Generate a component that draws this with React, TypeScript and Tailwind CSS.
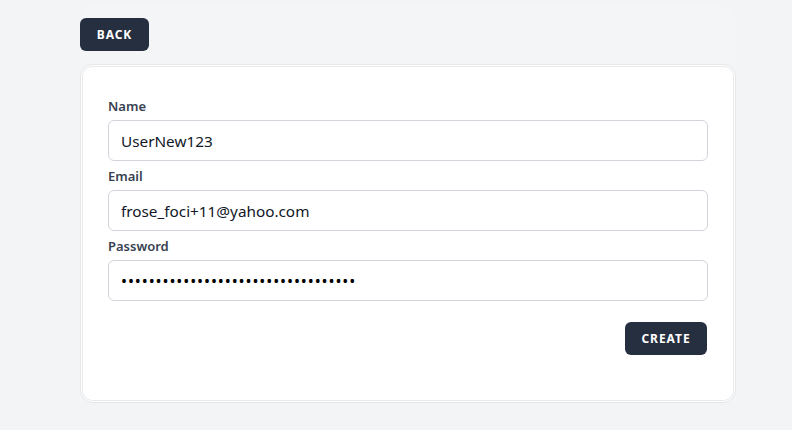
import React, { useState } from "react";

export default function App() {
  const [name, setName] = useState("UserNew123");
  const [email, setEmail] = useState("frose_foci+11@yahoo.com");
  const [password, setPassword] = useState("pass-word-1234567890-abcdefghijklm");

  const fields = [
    { label: "Name", type: "text", value: name, set: setName },
    { label: "Email", type: "email", value: email, set: setEmail },
    { label: "Password", type: "password", value: password, set: setPassword },
  ];

  return (
    <div className="min-h-screen w-full bg-[#f3f4f6] font-['Noto_Sans',sans-serif] pt-[5px]">
      <div className="ml-[80px] w-[656px] rounded-t-xl bg-[#f4f5f7] shadow-[0_0_1px_rgba(0,0,0,0.04)] pt-[13px]">
        <button className="h-[33px] w-[69px] rounded-md bg-[#252f3f] text-[12px] font-bold tracking-[0.08em] text-white">
          BACK
        </button>

        <div className="mt-[13px] rounded-xl border border-gray-200 bg-white pl-[27px] pr-7 pt-[31px] pb-[47px] shadow-[inset_0_0_0_1px_white,inset_0_0_0_2px_#e9eaec]">
          {fields.map((f, i) => (
            <div key={f.label} className={i > 0 ? "mt-[5px]" : ""}>
              <label className="block h-5 text-[13px] font-semibold leading-5 text-[#374151]">
                {f.label}
              </label>
              <input
                type={f.type}
                value={f.value}
                onChange={(e) => f.set(e.target.value)}
                className={
                  f.type === "password"
                    ? "mt-1 block h-[41px] w-[600px] rounded-md border border-[#d1d5db] px-3 text-[16px] tracking-[0.9px] text-black outline-none"
                    : "mt-1 block h-[41px] w-[600px] rounded-md border border-[#d1d5db] px-3 text-[15.3px] text-[#111827] outline-none"
                }
              />
            </div>
          ))}

          <div className="mt-[21px] flex justify-end">
            <button className="h-[33px] w-[82px] rounded-md bg-[#252f3f] text-[12px] font-bold tracking-[0.08em] text-white">
              CREATE
            </button>
          </div>
        </div>
      </div>
    </div>
  );
}
